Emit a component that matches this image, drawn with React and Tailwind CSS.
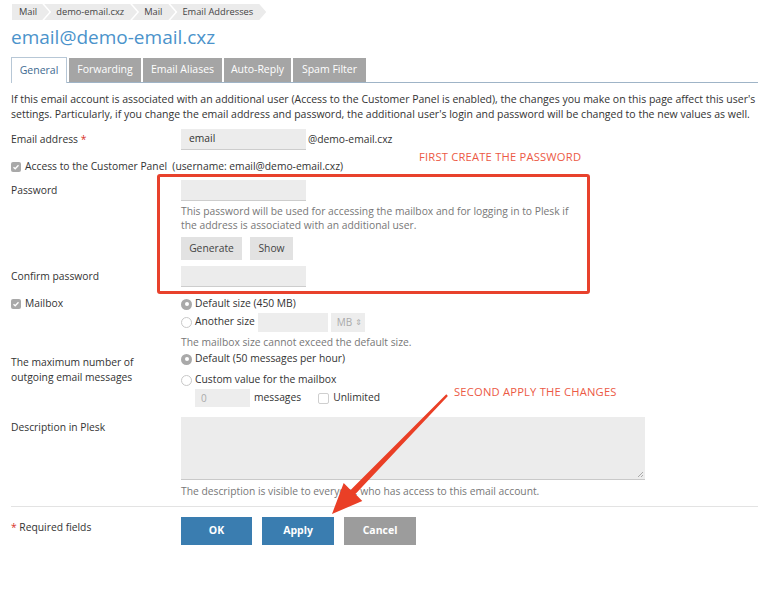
import React from "react";

const font = { fontFamily: '"Open Sans", "DejaVu Sans", sans-serif' };

function Crumb({ children, first }) {
  return (
    <div
      className={`h-[16px] flex items-center bg-[#ebebeb] text-[9.3px] text-[#444] ${first ? "pl-[7px] pr-[12px] [clip-path:polygon(0_0,calc(100%_-_7px)_0,100%_50%,calc(100%_-_7px)_100%,0_100%)]" : "pl-[12px] pr-[13px] -ml-[5px] [clip-path:polygon(0_0,calc(100%_-_7px)_0,100%_50%,calc(100%_-_7px)_100%,0_100%,7px_50%)]"}`}
    >
      {children}
    </div>
  );
}

function Check({ on = true }) {
  return on ? (
    <span className="inline-flex w-[10px] h-[10px] rounded-[2px] bg-[#a9a9a9] items-center justify-center shrink-0">
      <svg width="8" height="8" viewBox="0 0 8 8"><path d="M1.5 4.2 L3.2 5.8 L6.5 2.2" stroke="#fff" strokeWidth="1.3" fill="none" /></svg>
    </span>
  ) : (
    <span className="inline-block w-[11px] h-[11px] rounded-[2px] border border-[#cfcfcf] bg-white shrink-0" />
  );
}

function Radio({ on }) {
  return on ? (
    <span className="inline-flex w-[11px] h-[11px] rounded-full bg-[#a9a9a9] items-center justify-center shrink-0">
      <span className="w-[4px] h-[4px] rounded-full bg-white" />
    </span>
  ) : (
    <span className="inline-block w-[11px] h-[11px] rounded-full border border-[#c8c8c8] bg-white shrink-0" />
  );
}

function Input({ w = "w-[125px]", value }) {
  return (
    <div className={`${w} h-[21px] bg-[#ececec] border-b border-[#cdcdcd] flex items-center px-[8px] text-[10.3px] text-[#333]`}>
      {value}
    </div>
  );
}

function Row({ label, children, className = "" }) {
  return (
    <div className={`flex ${className}`}>
      <div className="w-[170px] shrink-0 text-[10.3px] text-[#333]">{label}</div>
      <div className="flex-1">{children}</div>
    </div>
  );
}

export default function App() {
  return (
    <div className="relative w-[758px] h-[608px] bg-white overflow-hidden text-[#333] text-[10.3px]" style={font}>
      <div className="pl-[11px]">
        {/* breadcrumbs */}
        <div className="flex pt-[4px] pl-[1px]">
          <Crumb first>Mail</Crumb>
          <Crumb>demo-email.cxz</Crumb>
          <Crumb>Mail</Crumb>
          <Crumb>Email Addresses</Crumb>
        </div>
        <h1 className="mt-[4px] text-[19px] leading-[26px] text-[#4b93cb] font-normal">email@demo-email.cxz</h1>

        {/* tabs */}
        <div className="mt-[7px] flex items-end gap-[2px] border-b border-[#9fb4c7] h-[26px]">
          <div className="h-[26px] w-[56px] -mb-[1px] bg-white border border-b-0 border-[#b7c7d6] flex items-center justify-center text-[10.5px] text-[#3e6a90]">General</div>
          <div className="h-[24px] w-[72px] bg-[#a5a5a5] flex items-center justify-center text-[10.5px] text-white">Forwarding</div>
          <div className="h-[24px] w-[79px] bg-[#a5a5a5] flex items-center justify-center text-[10.5px] text-white">Email Aliases</div>
          <div className="h-[24px] w-[67px] bg-[#a5a5a5] flex items-center justify-center text-[10.5px] text-white">Auto-Reply</div>
          <div className="h-[24px] w-[73px] bg-[#a5a5a5] flex items-center justify-center text-[10.5px] text-white">Spam Filter</div>
        </div>

        <p className="mt-[9px] text-[10.5px] leading-[15px] text-[#333] pr-[1px]">
          If this email account is associated with an additional user (Access to the Customer Panel is enabled), the changes you make on this page affect this user's settings. Particularly, if you change the email address and password, the additional user's login and password will be changed to the new values as well.
        </p>

        {/* email */}
        <Row className="mt-[7px] items-center" label={<span>Email address <span className="text-[#d8332a]">*</span></span>}>
          <div className="flex items-center">
            <Input value="email" />
            <span className="ml-[2px]">@demo-email.cxz</span>
          </div>
        </Row>

        <div className="mt-[9px] flex items-center gap-[4px] h-[16px]">
          <Check />
          <span>Access to the Customer Panel&nbsp; (username: email@demo-email.cxz)</span>
        </div>

        <Row className="mt-[5px]" label={<div className="pt-[3px]">Password</div>}>
          <Input />
          <p className="mt-[3px] leading-[14px] text-[#777] w-[400px]">
            This password will be used for accessing the mailbox and for logging in to Plesk if the address is associated with an additional user.
          </p>
          <div className="mt-[5px] flex gap-[8px]">
            <div className="h-[23px] w-[61px] bg-[#e2e2e2] flex items-center justify-center text-[#444]">Generate</div>
            <div className="h-[23px] w-[43px] bg-[#e2e2e2] flex items-center justify-center text-[#444]">Show</div>
          </div>
        </Row>

        <Row className="mt-[6px] items-center" label="Confirm password">
          <Input />
        </Row>

        {/* mailbox */}
        <Row className="mt-[9px]" label={<div className="flex items-center gap-[4px] h-[16px]"><Check /><span>Mailbox</span></div>}>
          <div className="flex items-center gap-[3px] h-[16px]"><Radio on /><span>Default size (450 MB)</span></div>
          <div className="flex items-center gap-[3px] h-[20px]">
            <Radio />
            <span>Another size</span>
            <div className="w-[70px] h-[19px] bg-[#ededed]" />
            <div className="ml-[0px] w-[34px] h-[19px] bg-[#ededed] flex items-center pl-[6px] text-[10px] text-[#aaa]">MB <span className="ml-[3px] text-[8px]">⇕</span></div>
          </div>
          <p className="mt-[3px] text-[#777] leading-[14px]">The mailbox size cannot exceed the default size.</p>
        </Row>

        <Row className="mt-[2px]" label={<div className="leading-[15px] pt-[4px]">The maximum number of<br />outgoing email messages</div>}>
          <div className="flex items-center gap-[3px] h-[16px]"><Radio on /><span>Default (50 messages per hour)</span></div>
          <div className="flex items-center gap-[3px] h-[16px] mt-[5px]"><Radio /><span>Custom value for the mailbox</span></div>
          <div className="flex items-center h-[18px] mt-[1px] pl-[14px]">
            <div className="w-[55px] h-[18px] bg-[#ededed] flex items-center pl-[6px] text-[10px] text-[#aaa]">0</div>
            <span className="ml-[4px]">messages</span>
            <span className="ml-[17px] flex"><Check on={false} /></span>
            <span className="ml-[4px]">Unlimited</span>
          </div>
        </Row>

        <Row className="mt-[10px]" label={<div className="pt-[3px]">Description in Plesk</div>}>
          <div className="relative w-[464px] h-[63px] bg-[#ececec] border-b border-[#c9c9c9]">
            <svg className="absolute right-[1px] bottom-[1px]" width="7" height="7" viewBox="0 0 7 7"><path d="M6 1 L1 6 M6 4 L4 6" stroke="#999" strokeWidth="0.8" /></svg>
          </div>
          <p className="mt-[4px] text-[#777] leading-[14px]">The description is visible to everyone who has access to this email account.</p>
        </Row>

        <div className="mt-[8px] border-t border-[#e3e3e3]" />

        <Row className="mt-[10px]" label={<div className="pt-[3px]"><span className="text-[#d8332a]">*</span> Required fields</div>}>
          <div className="flex gap-[10px]">
            <div className="w-[71px] h-[28px] bg-[#3a7db0] text-white text-[10.5px] font-bold flex items-center justify-center">OK</div>
            <div className="w-[72px] h-[28px] bg-[#3a7db0] text-white text-[10.5px] font-bold flex items-center justify-center">Apply</div>
            <div className="w-[72px] h-[28px] bg-[#9c9c9c] text-white text-[10.5px] font-bold flex items-center justify-center">Cancel</div>
          </div>
        </Row>
      </div>

      {/* annotations */}
      <div className="absolute left-[157px] top-[174px] w-[433px] h-[120px] border-[3px] border-[#e8412c] rounded-[3px]" />
      <div className="absolute left-[419px] top-[149px] text-[11.2px] text-[#ec5a45] tracking-[0.2px]">FIRST CREATE THE PASSWORD</div>
      <div className="absolute left-[454px] top-[384px] text-[11.2px] text-[#ec5a45] tracking-[0.2px]">SECOND APPLY THE CHANGES</div>
      <svg className="absolute left-0 top-0 pointer-events-none" width="758" height="608" viewBox="0 0 758 608">
        <polygon points="446.3,394.3 447.9,395.9 355.4,494.1 362.3,501 332,514 343.7,483 350.6,489.9" fill="#ea3f26" />
      </svg>
    </div>
  );
}
